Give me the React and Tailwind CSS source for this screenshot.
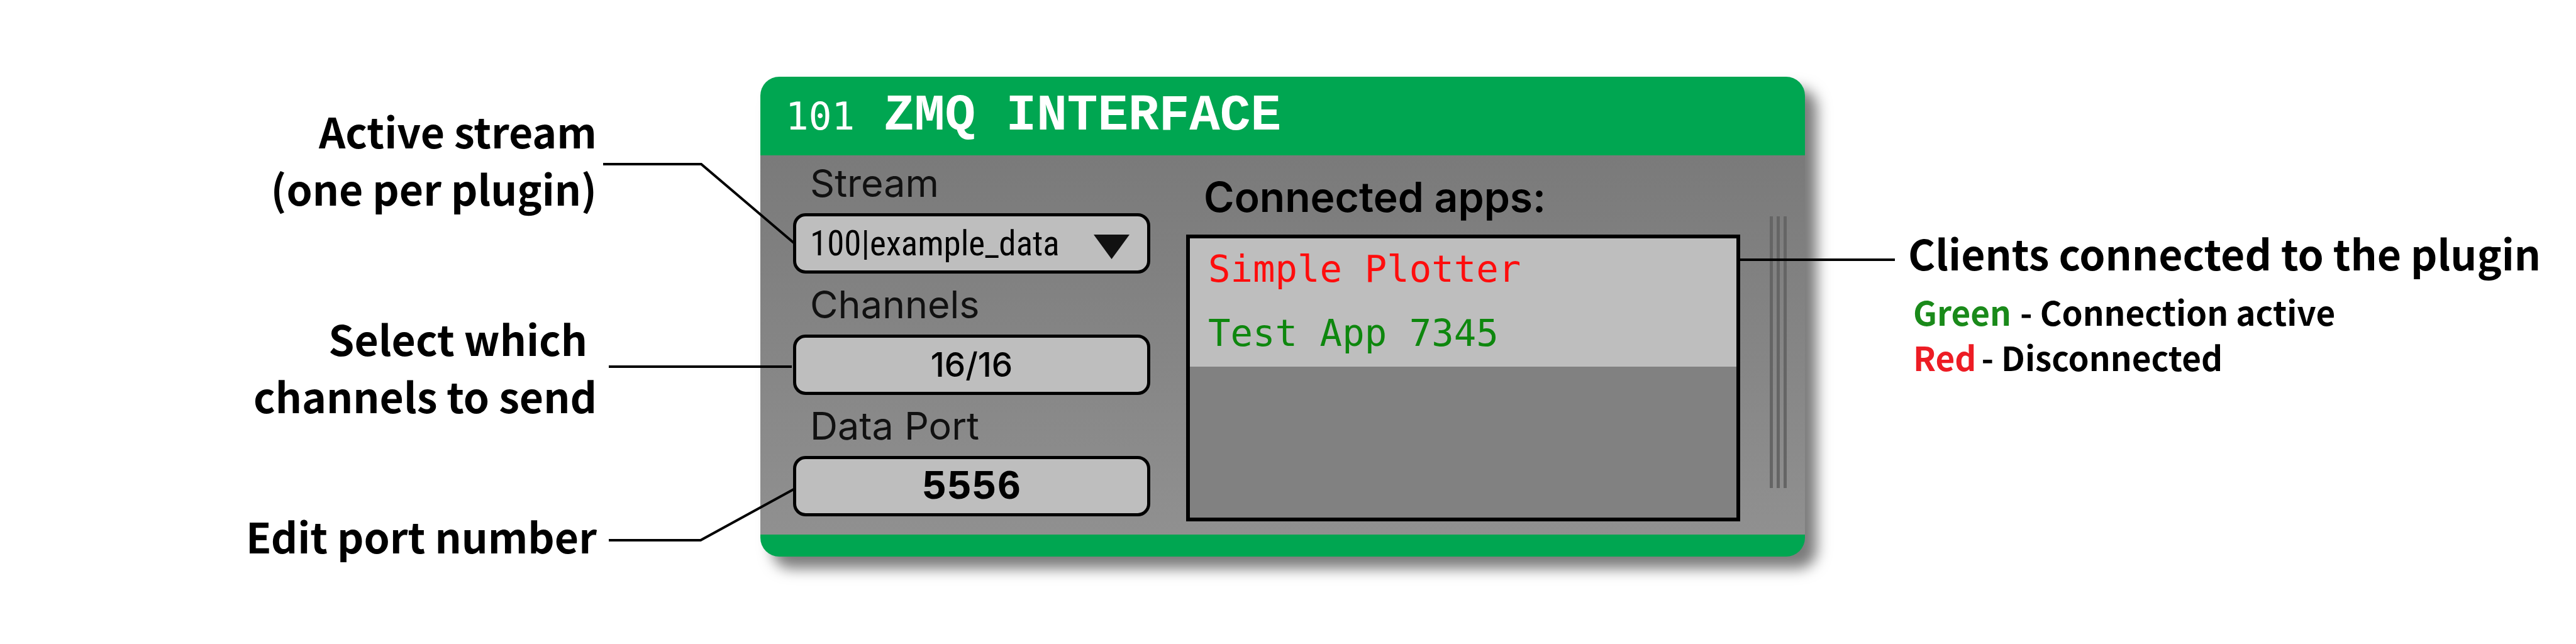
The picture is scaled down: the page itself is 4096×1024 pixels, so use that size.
function Note({ className = "", children }) {
  return <p className={"text-right text-[66px] leading-[91px] font-bold " + className}>{children}</p>;
}

function Field({ id, label, children }) {
  return (
    <div className="flex flex-col">
      <label htmlFor={id} className="h-[92px] pt-2 pl-[27px] font-['Inter',sans-serif] text-[61px] leading-[72px] text-[#111111]">
        {label}
      </label>
      {children}
    </div>
  );
}

const box = "h-24 w-full rounded-[20px] border-5 border-black bg-[#bebebe] text-black";

export default function App() {
  return (
    <main className="relative grid min-h-screen grid-cols-[1209fr_1661fr_1226fr] items-start bg-white pt-[122px] font-['Noto_Sans_CJK_SC',sans-serif] text-black">
      <section className="flex flex-col pt-10 pr-[260px]">
        <Note className="mb-[148px]">Active stream<br />(one per plugin)</Note>
        <Note className="mb-[132px] whitespace-pre">{"Select which \nchannels to send"}</Note>
        <Note>Edit port number</Note>
      </section>

      <section className="flex flex-col overflow-hidden rounded-[30px] bg-[#00a651] shadow-[19px_19px_22px_rgba(0,0,0,0.52)]">
        <header className="flex h-[125px] items-baseline gap-[46px] pt-[19px] pl-10 text-white">
          <span className="font-['DejaVu_Sans_Mono',monospace] text-[61px] leading-[88px]">101</span>
          <h1 className="font-['Liberation_Mono',monospace] text-[81px] leading-[88px] font-bold">ZMQ INTERFACE</h1>
        </header>

        <div className="flex h-[603px] bg-linear-to-b from-[#7a7a7a] to-[#909090] pr-[29px] pl-[52px]">
          <form className="flex w-[568px] flex-col gap-[5px]">
            <Field id="stream" label="Stream">
              <div className="relative">
                <select id="stream" className={box + " appearance-none pl-[22px] font-['Roboto_Condensed','Liberation_Sans_Narrow',sans-serif] text-[55px]"}>
                  <option>100|example_data</option>
                </select>
                <svg className="pointer-events-none absolute top-[34px] right-[33px] h-[39px] w-[57px]" viewBox="0 0 57 39" aria-hidden="true">
                  <path d="M0 0H57L28.5 39Z" fill="#111111" />
                </svg>
              </div>
            </Field>
            <Field id="channels" label="Channels">
              <button id="channels" type="button" className={box + " pt-[2px] font-['Inter',sans-serif] text-[53px] font-medium"}>16/16</button>
            </Field>
            <Field id="port" label="Data Port">
              <input id="port" defaultValue="5556" className={box + " pt-1 text-center font-['Liberation_Mono',monospace] text-[66px] font-bold"} />
            </Field>
          </form>

          <div className="ml-[57px] flex flex-1 flex-col">
            <h2 className="h-[126px] pt-7 pl-[28px] font-['Inter',sans-serif] text-[66px] leading-[76px] font-semibold">Connected apps:</h2>
            <ul className="h-[456px] border-6 border-black bg-[#818181] font-['DejaVu_Sans_Mono',monospace] text-[59px] leading-[98px]">
              <li className="bg-[#bebebe] pb-1 pl-[29px] text-[#ff0d0d]">Simple Plotter</li>
              <li className="bg-[#bebebe] pb-1 pl-[29px] text-[#0e870e]">Test App 7345</li>
            </ul>
          </div>

          <div className="mt-[97px] ml-[47px] flex h-[432px] gap-[6px]">
            <span className="w-[5px] bg-[#656565]" />
            <span className="w-[5px] bg-[#656565]" />
            <span className="w-[5px] bg-[#656565]" />
          </div>
        </div>
        <div className="h-[35px]" />
      </section>

      <section className="flex flex-col pt-[234px] pl-[164px]">
        <h2 className="mb-3 text-[66px] leading-[91px] font-bold whitespace-nowrap">Clients connected to the plugin</h2>
        <p className="pl-2 text-[53px] leading-[72px] font-bold"><span className="mr-[14px] text-[#1a8a1a]">Green</span>- Connection active</p>
        <p className="pl-2 text-[53px] leading-[72px] font-bold"><span className="mr-2 text-[#ed1c24]">Red</span>- Disconnected</p>
      </section>

      <svg className="pointer-events-none absolute inset-0 h-full w-full" viewBox="0 0 4096 1024" preserveAspectRatio="none" fill="none" stroke="#000" strokeWidth="4" aria-hidden="true">
        <path d="M959 261H1115L1262 386" />
        <path d="M968 583H1259" />
        <path d="M968 859H1114L1262 778" />
        <path d="M2767 413H3013" />
      </svg>
    </main>
  );
}
